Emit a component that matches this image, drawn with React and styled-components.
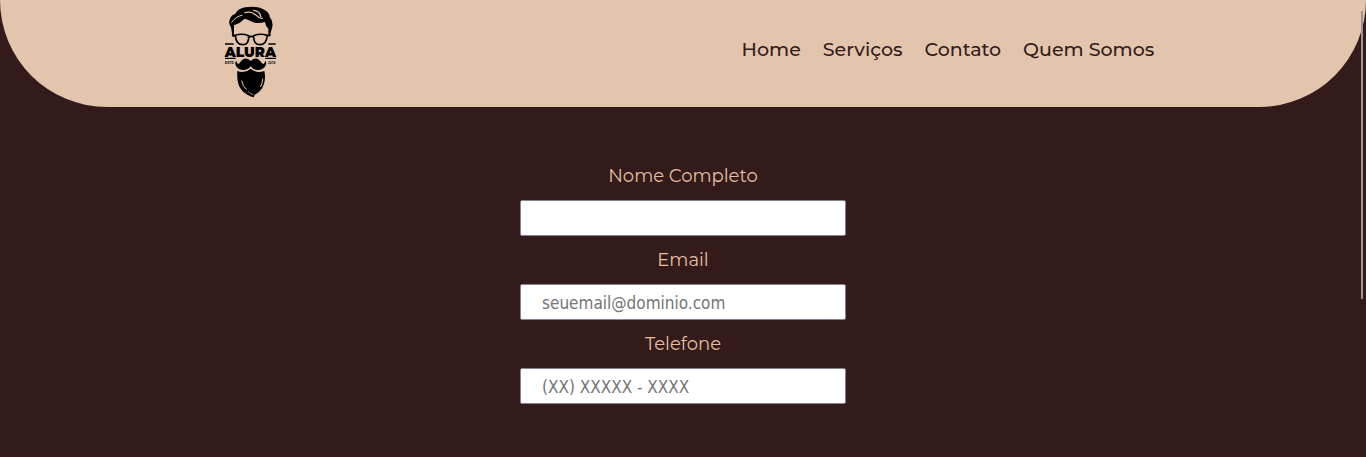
import React from "react";
import styled, { createGlobalStyle } from "styled-components";

const cream = "#e3c5ad";
const wine = "#331b1b";

const GlobalStyle = createGlobalStyle`
  * { box-sizing: border-box; }
  html { background: ${wine}; }
  body {
    margin: 0;
    font-family: Montserrat, Inter, sans-serif;
    overflow: hidden;
  }
`;

const Header = styled.header`
  display: flex;
  align-items: center;
  justify-content: space-between;
  padding: 0 15.5%;
  background: ${cream};
  border-radius: 0 0 107px 107px;
`;

const Logo = styled.svg`
  display: block;
  width: 76px;
  height: 107px;
`;

const Nav = styled.nav`
  display: flex;
  gap: 22px;
  padding-bottom: 8px;
`;

const NavLink = styled.a`
  color: ${wine};
  font-size: 19px;
  font-weight: 500;
  line-height: 24px;
  text-decoration: none;
`;

const Form = styled.form`
  display: flex;
  flex-direction: column;
  align-items: center;
  gap: 12px;
  padding: 57px 20px;
`;

const Field = styled.div`
  display: flex;
  flex-direction: column;
  align-items: center;
  gap: 12px;
  width: 326px;
  max-width: 100%;
`;

const Label = styled.label`
  color: #e5be9f;
  font-size: 18px;
  line-height: 24px;
`;

const Input = styled.input`
  width: 100%;
  height: 36px;
  padding: 1px 21px 0;
  border: 1px solid #858190;
  border-radius: 2px;
  background: #fff;
  color: #222;
  font-family: Tahoma, "DejaVu Sans Condensed", "Noto Sans", sans-serif;
  font-size: 17px;
  outline: none;
  &::placeholder { color: #757575; opacity: 1; }
`;

const ScrollThumb = styled.div`
  position: fixed;
  top: 11px;
  right: 3px;
  width: 2px;
  height: 288px;
  background: #999491;
`;

const links = ["Home", "Serviços", "Contato", "Quem Somos"];
const fields = [
  { id: "nome", label: "Nome Completo", type: "text" },
  { id: "email", label: "Email", type: "email", placeholder: "seuemail@dominio.com" },
  { id: "telefone", label: "Telefone", type: "tel", placeholder: "(XX) XXXXX - XXXX" },
];

function BarberLogo() {
  return (
    <Logo viewBox="6 0 228 321" role="img" aria-label="Alura">
      {/* hair */}
      <path d="M68 112 L63 82 Q54 69 60 56 Q63 46 76 41 Q86 24 106 22 Q139 16 160 28 Q178 36 179 51 Q190 62 187 80 L179 110 L175 107 L175 86 Q166 78 165 66 Q143 73 126 65 Q112 58 104 56 Q90 70 72 76 L72 110 Z" />
      <g fill="none" stroke={cream} strokeLinecap="round">
        <path d="M65 67 Q77 49 96 46" strokeWidth="3" />
        <path d="M105 38 Q125 33 136 44 Q144 53 157 55" strokeWidth="4" />
        <path d="M131 31 Q150 34 152 49" strokeWidth="4" />
      </g>
      {/* glasses */}
      <g fill="none" stroke="#000" strokeWidth="5">
        <path d="M76 106 Q95 99 116 107 Q118 134 98 134 Q78 134 76 106 Z" />
        <path d="M131 107 Q150 99 172 106 Q169 134 150 134 Q130 134 131 107 Z" />
        <path d="M116 112 Q123 106 131 112 M66 104 L77 108 M171 108 L182 104" />
      </g>
      {/* lettering */}
      <path d="M45 132 H71 M175 132 H197 M45 175 H77 M166 175 H198" stroke="#000" strokeWidth="4" />
      <text x="121" y="170" textAnchor="middle" fontFamily="Montserrat, Inter, sans-serif" fontWeight="900" fontSize="41">ALURA</text>
      <text x="45" y="191" fontFamily="Liberation Sans, sans-serif" fontWeight="700" fontSize="10">ESTD</text>
      <text x="174" y="191" fontFamily="Liberation Sans, sans-serif" fontWeight="700" fontSize="10">2019</text>
      {/* moustache and beard */}
      <path d="M122 183 Q111 173 100 177 Q93 182 88 190 Q82 196 79 182 Q72 190 80 201 Q88 211 102 210 Q115 209 122 199 Q129 209 142 210 Q156 211 164 201 Q172 190 166 182 Q163 196 156 190 Q151 182 144 177 Q133 173 122 183 Z" />
      <path d="M82 213 Q104 222 122 206 Q141 222 163 213 Q168 235 161 254 Q154 274 137 282 Q131 287 132 292 Q112 288 98 274 Q79 255 82 213 Z" />
      <g fill="none" stroke={cream} strokeLinecap="round">
        <path d="M95 243 Q98 259 109 268" strokeWidth="3" />
        <path d="M158 237 Q158 250 152 260" strokeWidth="3" />
        <path d="M115 275 Q122 283 130 284" strokeWidth="2" />
      </g>
    </Logo>
  );
}

export default function App() {
  return (
    <>
      <GlobalStyle />
      <Header>
        <BarberLogo />
        <Nav>
          {links.map((text) => (
            <NavLink href="#" key={text}>{text}</NavLink>
          ))}
        </Nav>
      </Header>
      <main>
        <Form>
          {fields.map(({ id, label, ...rest }) => (
            <Field key={id}>
              <Label htmlFor={id}>{label}</Label>
              <Input id={id} name={id} {...rest} />
            </Field>
          ))}
        </Form>
      </main>
      <ScrollThumb />
    </>
  );
}
